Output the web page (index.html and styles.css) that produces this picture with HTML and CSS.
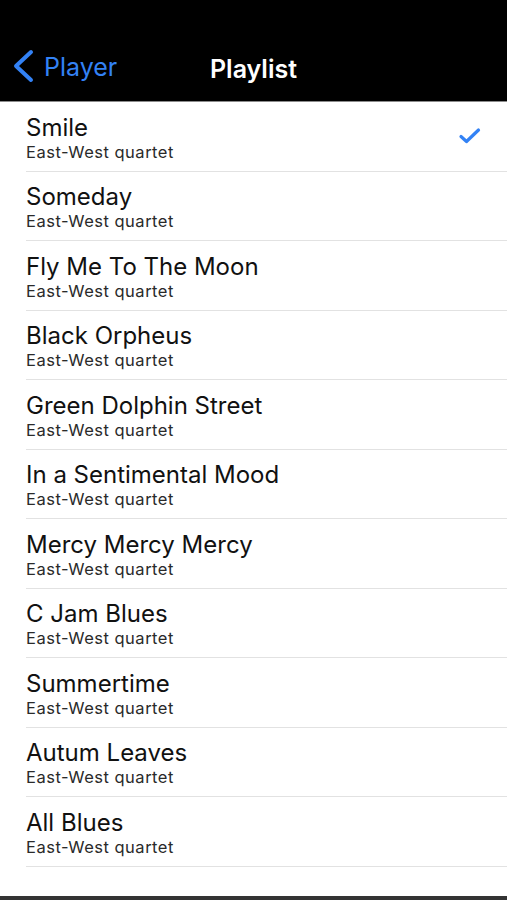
FILE: index.html
```html
<!DOCTYPE html>
<html>
<head>
<meta charset="utf-8">
<link rel="stylesheet" href="styles.css">
</head>
<body>
<div class="screen">
  <header class="navbar">
    <div class="back">
      <svg class="chevron" width="24" height="34" viewBox="0 0 24 34"><path d="M19 3 L4 17 L19 31" fill="none" stroke="#3382f5" stroke-width="4" stroke-linecap="round" stroke-linejoin="round"/></svg>
      <span class="back-label">Player</span>
    </div>
    <div class="title">Playlist</div>
    <div class="spacer"></div>
  </header>
  <ul class="list">
    <li class="row"><div class="text"><div class="song">Smile</div><div class="artist">East-West quartet</div></div>
      <svg class="check" width="24" height="18" viewBox="0 0 24 18"><path d="M3 9.5 L8.5 14.5 L20.5 3" fill="none" stroke="#3382f5" stroke-width="3.2" stroke-linecap="round" stroke-linejoin="round"/></svg></li>
    <li class="row"><div class="text"><div class="song">Someday</div><div class="artist">East-West quartet</div></div></li>
    <li class="row"><div class="text"><div class="song">Fly Me To The Moon</div><div class="artist">East-West quartet</div></div></li>
    <li class="row"><div class="text"><div class="song">Black Orpheus</div><div class="artist">East-West quartet</div></div></li>
    <li class="row"><div class="text"><div class="song">Green Dolphin Street</div><div class="artist">East-West quartet</div></div></li>
    <li class="row"><div class="text"><div class="song">In a Sentimental Mood</div><div class="artist">East-West quartet</div></div></li>
    <li class="row"><div class="text"><div class="song">Mercy Mercy Mercy</div><div class="artist">East-West quartet</div></div></li>
    <li class="row"><div class="text"><div class="song">C Jam Blues</div><div class="artist">East-West quartet</div></div></li>
    <li class="row"><div class="text"><div class="song">Summertime</div><div class="artist">East-West quartet</div></div></li>
    <li class="row"><div class="text"><div class="song">Autum Leaves</div><div class="artist">East-West quartet</div></div></li>
    <li class="row"><div class="text"><div class="song">All Blues</div><div class="artist">East-West quartet</div></div></li>
  </ul>
  <div class="bottom-bar"></div>
</div>
</body>
</html>
```

FILE: styles.css
```css
html, body {
  margin: 0;
  padding: 0;
  background: #fff;
}
body {
  font-family: Inter, "Liberation Sans", Arial, sans-serif;
}
.screen {
  display: flex;
  flex-direction: column;
  min-height: 900px;
}
.navbar {
  background: #000;
  border-bottom: 1px solid #8c8c8c;
  display: grid;
  grid-template-columns: 1fr auto 1fr;
  align-items: end;
  padding: 0 0 17px 0;
  box-sizing: border-box;
  height: 102px;
}
.back {
  display: flex;
  align-items: center;
  padding-left: 12px;
  gap: 8px;
}
.chevron {
  display: block;
  margin-bottom: 1px;
}
.back-label {
  color: #3382f5;
  font-size: 25px;
  line-height: 30px;
}
.title {
  color: #fff;
  font-size: 25px;
  line-height: 30px;
  font-weight: 600;
}
.list {
  list-style: none;
  margin: 0;
  padding: 0 0 0 26px;
}
.row {
  height: 69.5px;
  box-sizing: border-box;
  border-bottom: 1px solid #e2e2e2;
  display: flex;
  align-items: center;
  justify-content: space-between;
  padding-right: 25px;
}
.text {
  padding-top: 3px;
}
.song {
  font-size: 24px;
  line-height: 28px;
  color: #111;
}
.artist {
  font-size: 16.5px;
  line-height: 20px;
  letter-spacing: 0.5px;
  color: #2a2a2a;
  margin-top: 0;
}
.check {
  display: block;
}
.bottom-bar {
  margin-top: auto;
  height: 4px;
  background: #333;
}
```
